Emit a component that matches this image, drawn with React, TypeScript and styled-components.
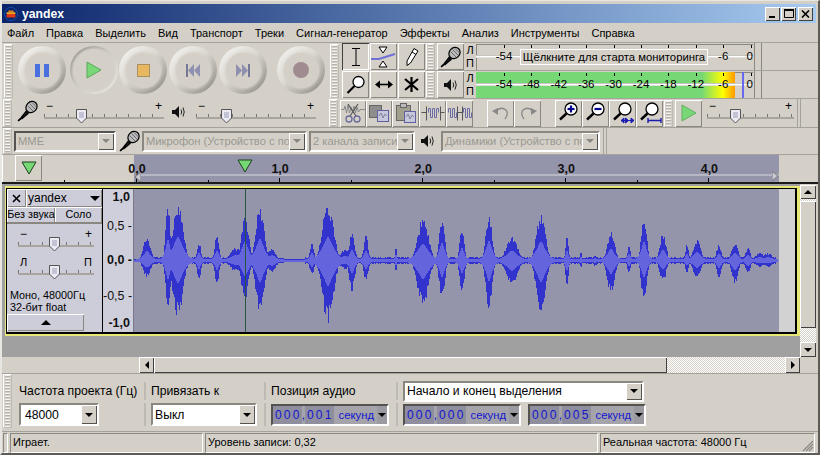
import React, { useMemo } from 'react';
import styled, { createGlobalStyle } from 'styled-components';

const GlobalStyle = createGlobalStyle`
  html, body { margin: 0; padding: 0; background: #fff; }
  * { box-sizing: border-box; }
  body { font-family: "Liberation Sans", Arial, sans-serif; font-size: 11px; color: #000; }
`;

const FACE = '#d4d0c8';
const LINE = '#a5a29b';

const Win = styled.div`
  width: 820px;
  height: 455px;
  background: ${FACE};
  border-top: 1px solid #e8e6e1;
  border-right: 2px solid #5c5b58;
  border-bottom: 2px solid #5c5b58;
  border-left: 2px solid #e8e6e1;
  padding-top: 3px;
  display: flex;
  flex-direction: column;
  overflow: hidden;
`;

const TitleBar = styled.div`
  height: 19px;
  flex: none;
  display: flex;
  align-items: center;
  margin-right: 2px;
  padding: 0 3px 0 2px;
  background: linear-gradient(90deg, #0a246a, #a6caf0);
  color: #fff;
  font-weight: bold;
  font-size: 12.2px;
`;

const TitleText = styled.span`
  margin-left: 4px;
  flex: 1;
`;

const WinBtn = styled.div<{ $gap?: number }>`
  width: 15px;
  height: 14px;
  margin-left: ${(p) => p.$gap ?? 0}px;
  background: ${FACE};
  box-shadow: inset 1px 1px #fff, inset -1px -1px #404040;
  display: flex;
  align-items: center;
  justify-content: center;
`;

const MenuBar = styled.div`
  height: 19px;
  flex: none;
  display: flex;
  gap: 12px;
  align-items: center;
  padding-left: 5px;
  font-size: 11px;
`;

const TopDock = styled.div`
  height: 57px;
  flex: none;
  display: flex;
  border-top: 1px solid ${LINE};
`;

const Grip = styled.div<{ $h?: number; $ml?: number }>`
  width: 9px;
  flex: none;
  height: ${(p) => (p.$h ? `${p.$h}px` : 'auto')};
  align-self: ${(p) => (p.$h ? 'center' : 'stretch')};
  margin-left: ${(p) => p.$ml ?? 0}px;
  border: 1px solid #bdbab3;
  border-top-color: #fff;
  border-left-color: #fff;
  background: repeating-linear-gradient(180deg, #f4f3f0 0 1px, #b5b2ab 1px 2px, ${FACE} 2px 3px);
  background-size: 5px 100%;
  background-position: center;
  background-repeat: no-repeat;
`;

const Transport = styled.div`
  width: 338px;
  flex: none;
  display: flex;
  align-items: center;
  padding: 1px 0 1px 2px;
`;

const RoundBtn = styled.div<{ $ml: number; $pressed?: boolean }>`
  width: 48px;
  height: 48px;
  flex: none;
  margin-left: ${(p) => p.$ml}px;
  margin-bottom: 2px;
  border-radius: 50%;
  display: flex;
  align-items: center;
  justify-content: center;
  background: ${(p) =>
    p.$pressed
      ? 'linear-gradient(135deg, #85827c, #c8c5bd 45%, #f4f3f0)'
      : 'linear-gradient(135deg, #f7f6f3, #dcd9d2 45%, #86837d)'};
  filter: blur(0.3px);
`;

const RoundFace = styled.div<{ $pressed?: boolean }>`
  width: ${(p) => (p.$pressed ? 42 : 35)}px;
  height: ${(p) => (p.$pressed ? 42 : 35)}px;
  border-radius: 50%;
  background: ${FACE};
  box-shadow: 0 0 3px 1px ${FACE};
  display: flex;
  align-items: center;
  justify-content: center;
`;

const Tools = styled.div`
  width: 84px;
  flex: none;
  margin-left: 2px;
  display: grid;
  grid-template-columns: repeat(3, 27px);
  grid-auto-rows: 27px;
  gap: 1px;
`;

const ToolBtn = styled.div<{ $w?: number; $pressed?: boolean; $ml?: number; $fill?: boolean }>`
  width: ${(p) => (p.$w ? `${p.$w}px` : 'auto')};
  height: ${(p) => (p.$w && !p.$fill ? '27px' : 'auto')};
  flex: none;
  margin-left: ${(p) => p.$ml ?? 0}px;
  background: ${FACE};
  box-shadow: ${(p) =>
    p.$pressed
      ? 'inset 1px 1px #404040, inset -1px -1px #fff'
      : 'inset 1px 1px #fff, inset -1px -1px #8a8780'};
  display: flex;
  align-items: center;
  justify-content: center;
`;

const MeterCol = styled.div`
  flex: 1;
  display: flex;
  flex-direction: column;
`;

const MeterRow = styled.div`
  height: 28px;
  flex: none;
  display: flex;
  align-items: stretch;
  border-bottom: 1px solid ${LINE};
`;

const LR = styled.div`
  width: 12px;
  flex: none;
  display: flex;
  flex-direction: column;
  justify-content: space-around;
  align-items: center;
  font-size: 11px;
  line-height: 12px;
`;

const Meter = styled.div`
  position: relative;
  width: 277px;
  flex: none;
  margin: 1px 0 0;
  background: ${FACE};
  box-shadow: inset 1px 1px #8a8780;
  overflow: hidden;
`;

const MeterFill = styled.div`
  height: 100%;
  width: 259px;
  background: linear-gradient(90deg, #76d874 0, #76d874 226px, #ffff00 247px, #ffb000 256px, #ff9a00 259px);
`;

const MeterDivider = styled.div`
  position: absolute;
  left: 0;
  right: 0;
  top: 11px;
  height: 3px;
  background: linear-gradient(180deg, #a8a8a0, #fff 50%, ${FACE});
`;

const MeterPeak = styled.div`
  position: absolute;
  top: 0;
  bottom: 0;
  left: 266px;
  width: 2px;
  background: #6868f0;
`;

const MeterTick = styled.span<{ $left: number }>`
  position: absolute;
  top: 1px;
  left: ${(p) => p.$left}px;
  width: 1px;
  height: 3px;
  background: #000;
`;

const MeterLabel = styled.span<{ $left: number }>`
  position: absolute;
  top: 5px;
  left: ${(p) => p.$left}px;
  width: 24px;
  margin-left: -12px;
  text-align: center;
  font-size: 11.5px;
  line-height: 14px;
`;

const MeterMessage = styled.div`
  position: absolute;
  left: 44px;
  top: 5px;
  width: 188px;
  height: 16px;
  border: 1px solid #fff;
  background: ${FACE};
  font-size: 11.3px;
  line-height: 14px;
  text-align: center;
  white-space: nowrap;
`;

const MeterEnd = styled.div`
  width: 8px;
  flex: none;
  border-left: 1px solid #8a8780;
  border-right: 1px solid #8a8780;
  margin-left: 1px;
`;

const Dock = styled.div<{ $h: number }>`
  height: ${(p) => p.$h}px;
  flex: none;
  display: flex;
  align-items: center;
  border-bottom: 1px solid ${LINE};
  padding-left: 1px;
`;

const DockSep = styled.div<{ $ml: number }>`
  width: 4px;
  align-self: stretch;
  flex: none;
  margin-left: ${(p) => p.$ml}px;
  border-left: 1px solid ${LINE};
  border-right: 1px solid ${LINE};
`;

const IconSlot = styled.div<{ $w: number; $ml: number; $pt?: number }>`
  width: ${(p) => p.$w}px;
  height: 26px;
  flex: none;
  margin-left: ${(p) => p.$ml}px;
  padding-top: ${(p) => p.$pt ?? 0}px;
`;

const SliderBox = styled.div<{ $w: number; $ml: number; $mt?: number }>`
  position: relative;
  width: ${(p) => p.$w}px;
  height: 26px;
  flex: none;
  margin-left: ${(p) => p.$ml}px;
  margin-top: ${(p) => p.$mt ?? 0}px;
`;

const SliderEnds = styled.div<{ $big?: boolean }>`
  display: flex;
  justify-content: space-between;
  padding: 0 2px;
  height: 12px;
  font-size: ${(p) => (p.$big ? 11 : 12)}px;
  line-height: 12px;
`;

const SliderRail = styled.div`
  margin-top: 2px;
  height: 5px;
  border-bottom: 2px solid #a8a59e;
  background: repeating-linear-gradient(90deg, #77746e 0 1px, transparent 1px 12px) left top / 100% 3px no-repeat;
`;

const SliderThumb = styled.svg<{ $left: number }>`
  position: absolute;
  left: ${(p) => p.$left}px;
  bottom: 2px;
`;

const Combo = styled.div<{ $w: number; $ml?: number; $h?: number; $off?: boolean; $dark?: boolean }>`
  width: ${(p) => p.$w}px;
  height: ${(p) => p.$h ?? 21}px;
  flex: none;
  margin-left: ${(p) => p.$ml ?? 0}px;
  display: flex;
  align-items: center;
  background: ${(p) => (p.$off ? FACE : '#fff')};
  color: ${(p) => (p.$off ? '#9a9890' : '#000')};
  border: 2px solid;
  border-color: ${(p) => (p.$dark ? '#55534f' : '#8a8780')} #fff #fff ${(p) => (p.$dark ? '#55534f' : '#8a8780')};
  font-size: ${(p) => (p.$off ? 11.2 : 12.2)}px;
  overflow: hidden;
`;

const ComboText = styled.span<{ $pl?: number }>`
  flex: 1;
  min-width: 0;
  padding-left: ${(p) => p.$pl ?? 2}px;
  white-space: nowrap;
  overflow: hidden;
`;

const DropBtn = styled.div`
  width: 16px;
  align-self: stretch;
  flex: none;
  background: ${FACE};
  box-shadow: inset 1px 1px #fff, inset -1px -1px #55534f;
  display: flex;
  align-items: center;
  justify-content: center;
`;

const RulerRow = styled.div`
  height: 29px;
  flex: none;
  display: flex;
  border-bottom: 2px solid #1a1a1a;
`;

const RulerLeft = styled.div`
  position: relative;
  width: 132px;
  flex: none;
  padding-left: 12px;
  border-left: 1px solid #fff;
`;

const PlayAtBtn = styled.div`
  width: 27px;
  height: 26px;
  background: ${FACE};
  box-shadow: inset 1px 1px #fff, inset -1px -1px #8a8780;
  display: flex;
  align-items: center;
  justify-content: center;
`;

const RulerBody = styled.div`
  position: relative;
  width: 645px;
  flex: none;
  background: #9494aa;
`;

const RulerSlide = styled.div`
  position: absolute;
  left: 2px;
  right: 0;
  top: 19px;
  height: 2px;
  background: #b6b6c4;
`;

const RulerNum = styled.span<{ $left: number }>`
  position: absolute;
  top: 7px;
  left: ${(p) => p.$left}px;
  transform: translateX(-50%);
  font-size: 12.5px;
  font-weight: bold;
  line-height: 14px;
  color: #111;
`;

const RulerTick = styled.span<{ $left: number; $major?: boolean }>`
  position: absolute;
  bottom: 0;
  left: ${(p) => p.$left}px;
  width: 1px;
  height: ${(p) => (p.$major ? 4 : 2)}px;
  background: #000;
`;

const RulerMark = styled.svg<{ $left: number; $top: number }>`
  position: absolute;
  left: ${(p) => p.$left}px;
  top: ${(p) => p.$top}px;
`;

const TrackZone = styled.div`
  height: 173px;
  flex: none;
  display: flex;
`;

const TrackScroll = styled.div`
  width: 798px;
  flex: none;
  background: #a0a0a0;
  padding: 2px 0 0 3px;
`;

const TrackFrame = styled.div`
  width: 795px;
  height: 150px;
  background: #e8e878;
  padding: 2px 3px 2px 1px;
`;

const Track = styled.div`
  height: 100%;
  display: flex;
  border: 1px solid #000;
  border-right-width: 2px;
  border-bottom-width: 2px;
  background: #000;
`;

const TrackPanel = styled.div`
  width: 96px;
  flex: none;
  display: flex;
  flex-direction: column;
  background: #cdcdda;
  border-right: 1px solid #000;
`;

const PanelHead = styled.div`
  height: 18px;
  flex: none;
  display: flex;
`;

const PanelClose = styled.div`
  width: 19px;
  flex: none;
  box-shadow: inset 1px 1px #fff, inset -1px -1px #8a8780;
  display: flex;
  align-items: center;
  justify-content: center;
`;

const PanelName = styled.div`
  flex: 1;
  display: flex;
  align-items: center;
  justify-content: space-between;
  padding: 0 2px 0 2px;
  font-size: 12px;
  box-shadow: inset 1px 1px #fff, inset -1px -1px #8a8780;
`;

const PanelBtns = styled.div`
  height: 17px;
  flex: none;
  display: flex;
  border-bottom: 2px solid #8a8780;
`;

const PanelBtn = styled.div<{ $w: number }>`
  width: ${(p) => p.$w}px;
  flex: none;
  text-align: center;
  line-height: 15px;
  font-size: 10.8px;
  white-space: nowrap;
  overflow: hidden;
  box-shadow: inset 1px 1px #fff, inset -1px 0 #8a8780;
`;

const PanelInfo = styled.div`
  margin: 7px 0 0 3px;
  font-size: 10.8px;
  line-height: 12px;
`;

const Collapse = styled.div`
  width: 77px;
  height: 17px;
  margin-top: 1px;
  box-shadow: inset 1px 1px #fff, inset -1px -1px #8a8780;
  display: flex;
  align-items: center;
  justify-content: center;
`;

const VRuler = styled.div`
  width: 31px;
  flex: none;
  display: flex;
  flex-direction: column;
  background: #cfcfdb;
  border-right: 1px solid #77778a;
`;

const VRulerMark = styled.div<{ $bold?: boolean; $tick?: boolean; $mt: number }>`
  margin-top: ${(p) => p.$mt}px;
  text-align: right;
  padding-right: ${(p) => (p.$tick ? 1 : 3)}px;
  font-size: 12.5px;
  line-height: 14px;
  font-weight: ${(p) => (p.$bold ? 'bold' : 'normal')};
  color: #111;
  white-space: nowrap;
`;

const WaveZone = styled.div`
  flex: 1;
  display: flex;
  background: #d2d2d2;
`;

const WaveSvg = styled.svg`
  display: block;
  flex: none;
  background: #9494aa;
`;

const VBar = styled.div`
  width: 16px;
  flex: none;
  display: flex;
  flex-direction: column;
  background: repeating-conic-gradient(#fff 0 25%, ${FACE} 0 50%) 0 0 / 2px 2px;
  margin-top: 1px;
`;

const ScrollBtn = styled.div<{ $w?: number; $h?: number; $mt?: number }>`
  width: ${(p) => (p.$w ? `${p.$w}px` : '100%')};
  height: ${(p) => (p.$h ? `${p.$h}px` : '100%')};
  margin-top: ${(p) => p.$mt ?? 0}px;
  flex: none;
  background: ${FACE};
  box-shadow: inset 1px 1px #fff, inset -1px -1px #404040;
  display: flex;
  align-items: center;
  justify-content: center;
`;

const Spacer = styled.div`
  flex: 1;
`;

const HBarRow = styled.div`
  height: 16px;
  flex: none;
  display: flex;
  padding-left: 137px;
`;

const HBar = styled.div`
  width: 661px;
  flex: none;
  display: flex;
  background: repeating-conic-gradient(#fff 0 25%, ${FACE} 0 50%) 0 0 / 2px 2px;
`;

const SelBar = styled.div`
  height: 59px;
  flex: none;
  display: flex;
  border-top: 1px solid ${LINE};
  border-bottom: 1px solid ${LINE};
  padding: 0 0 3px 1px;
`;

const SelGroup = styled.div<{ $w: number; $first?: boolean }>`
  width: ${(p) => p.$w}px;
  flex: none;
  display: flex;
  flex-direction: column;
  gap: 3px;
  padding-top: 8px;
  margin-left: ${(p) => (p.$first ? 7 : 0)}px;
`;

const SelCell = styled.div<{ $sep?: boolean; $h: number }>`
  height: ${(p) => p.$h}px;
  display: flex;
  align-items: center;
  font-size: 12.2px;
  white-space: nowrap;
  padding-left: ${(p) => (p.$sep ? 5 : 0)}px;
  border-left: ${(p) => (p.$sep ? `2px solid #bdbab3` : 'none')};
`;

const TimeCtl = styled.div<{ $ml?: number }>`
  width: 118px;
  height: 22px;
  flex: none;
  margin-left: ${(p) => p.$ml ?? 0}px;
  display: flex;
  align-items: center;
  background: #a4a4aa;
  border: 2px solid;
  border-color: #55534f #fff #fff #55534f;
  color: #1414d0;
  font-size: 12px;
  overflow: hidden;
`;

const Digits = styled.span`
  height: 100%;
  background: #8e8e9e;
  padding: 0 0 0 2px;
  letter-spacing: 2.2px;
  line-height: 18px;
`;

const Comma = styled.span`
  line-height: 18px;
`;

const TimeUnit = styled.span`
  margin-left: 5px;
  flex: 1;
  font-size: 11.3px;
  white-space: nowrap;
`;

const TimeDrop = styled.div`
  width: 10px;
  align-self: stretch;
  flex: none;
  background: #9a9aa0;
  display: flex;
  align-items: center;
  justify-content: center;
`;

const StatusBar = styled.div`
  flex: 1;
  display: flex;
  gap: 2px;
  padding: 1px 0 0 1px;
`;

const StatusCell = styled.div<{ $w: number }>`
  width: ${(p) => p.$w}px;
  flex: none;
  padding-left: 2px;
  font-size: 11px;
  line-height: 17px;
  border: 1px solid;
  border-color: #8a8780 #fff #fff #8a8780;
  white-space: nowrap;
  position: relative;
`;

const ResizeGrip = styled.svg`
  position: absolute;
  right: 0;
  bottom: 0;
`;

/* icons */

const Arrow = ({ dir = 'down', s = 4, c = '#000' }: { dir?: 'down' | 'up' | 'left' | 'right'; s?: number; c?: string }) => {
  const pts = {
    down: `0,0 ${s * 2},0 ${s},${s}`,
    up: `${s},0 ${s * 2},${s} 0,${s}`,
    left: `${s},0 ${s},${s * 2} 0,${s}`,
    right: `0,0 ${s},${s} 0,${s * 2}`,
  }[dir];
  const vertical = dir === 'down' || dir === 'up';
  return (
    <svg width={vertical ? s * 2 : s} height={vertical ? s : s * 2}>
      <polygon points={pts} fill={c} />
    </svg>
  );
};

const Mic = () => (
  <svg width="22" height="22" viewBox="0 0 22 22">
    <path d="M1.5 20.5 L4 18 L9 11.5 L11 13.5 L4.5 19" fill="#222" stroke="#000" strokeWidth="1.4" />
    <path d="M1 21 L4 18.5" stroke="#000" strokeWidth="1.5" />
    <ellipse cx="14.5" cy="7" rx="6" ry="5.2" transform="rotate(-45 14.5 7)" fill="#bbb" stroke="#000" strokeWidth="1.2" />
    <path d="M10.5 5.5 L16 11 M12.5 3.5 L18 9 M15 2.5 L19.5 7" stroke="#555" strokeWidth="0.8" />
  </svg>
);

const Speaker = () => (
  <svg width="14" height="14" viewBox="0 0 14 14">
    <polygon points="0,5 3,5 7,1 7,13 3,9 0,9" fill="#111" />
    <path d="M9 4.5 Q10.5 7 9 9.5 M11 2.5 Q13.5 7 11 11.5" stroke="#222" strokeWidth="1" fill="none" />
  </svg>
);

const Lens = ({ mark, extra }: { mark?: '+' | '-'; extra?: 'fit' | 'sel' }) => (
  <svg width="24" height="24" viewBox="0 0 24 24">
    <circle cx="14" cy="8" r="6" fill="#fff" stroke="#000" strokeWidth="1.3" />
    <path d="M9.5 12.5 L3 18.5" stroke="#000" strokeWidth="2.4" />
    {mark && <path d="M10.5 8 H17.5" stroke="#00008c" strokeWidth="2.2" />}
    {mark === '+' && <path d="M14 4.5 V11.5" stroke="#00008c" strokeWidth="2.2" />}
    {extra === 'fit' && (
      <g fill="#1c1cb0" stroke="#1c1cb0">
        <path d="M10 19.5 H23" strokeWidth="1" />
        <polygon points="10,19.5 13,17 13,22" />
        <polygon points="17.5,19.5 14.5,17 14.5,22" />
        <polygon points="23,19.5 20,17 20,22" />
      </g>
    )}
    {extra === 'sel' && <path d="M10 17 V22 M10 19.5 H23 M23 17 V22" stroke="#1c1cb0" strokeWidth="1.4" fill="none" />}
  </svg>
);

const WaveGlyph = ({ d, bars }: { d: string; bars: string }) => (
  <svg width="24" height="18" viewBox="0 0 24 18">
    <g transform="translate(0.5 0.5)">
      <path d={d} fill="none" stroke="#6c6ca4" strokeWidth="1" />
      <path d={bars} fill="none" stroke="#555" strokeWidth="1" />
    </g>
  </svg>
);

const Thumb = ({ left }: { left: number }) => (
  <SliderThumb $left={left} width="13" height="16" viewBox="0 0 13 16">
    <path d="M1.5 1.5 H11.5 V10 L6.5 15 L1.5 10 Z" fill="#ecebf4" stroke="#555" strokeWidth="1" />
    <path d="M4 5 H9 M4 7 H9 M4 9 H9" stroke="#9a9ab8" strokeWidth="1" />
  </SliderThumb>
);

const Slider = ({ w, ml, mt, thumb, a = '−', b = '+' }: { w: number; ml: number; mt?: number; thumb: number; a?: string; b?: string }) => (
  <SliderBox $w={w} $ml={ml} $mt={mt}>
    <SliderEnds $big={a !== '−'}>
      <span>{a}</span>
      <span>{b}</span>
    </SliderEnds>
    <SliderRail />
    <Thumb left={thumb} />
  </SliderBox>
);

const Time = ({ a, b, ml }: { a: string; b: string; ml?: number }) => (
  <TimeCtl $ml={ml}>
    <Digits>{a}</Digits>
    <Comma>,</Comma>
    <Digits>{b}</Digits>
    <TimeUnit>секунд</TimeUnit>
    <TimeDrop>
      <Arrow s={4} />
    </TimeDrop>
  </TimeCtl>
);

/* waveform: [centre x, up, down, width] in screen pixels */
const BUMPS: number[][] = [
  [147, 22, 16, 4], [168, 52, 46, 2.6], [178, 57, 54, 5.5], [199, 19, 20, 2], [217, 24, 22, 2.4],
  [236, 12, 10, 6], [245, 45, 38, 4], [260, 52, 51, 4.6], [272, 12, 12, 4], [312, 18, 15, 2.2],
  [328, 56, 60, 6], [345, 10, 8, 5], [352, 25, 30, 3], [366, 24, 20, 2.4], [396, 14, 12, 1],
  [423, 40, 44, 6], [442, 43, 40, 3], [462, 30, 31, 2.6], [489, 47, 50, 3.4], [512, 23, 24, 6],
  [541, 45, 52, 5], [567, 24, 25, 1.6], [581, 10, 7, 1], [595, 5, 5, 2], [611, 27, 32, 4],
  [629, 16, 13, 1.6], [644, 46, 40, 3], [663, 26, 21, 3.4], [687, 15, 12, 1.8], [697, 20, 18, 4],
  [719, 15, 17, 2.6], [735, 18, 23, 3.4], [748, 12, 13, 2.6], [760, 7, 6, 5], [768, 7, 6, 5],
];

const noise = (n: number) => {
  const v = Math.sin(n * 12.9898) * 43758.5453;
  return v - Math.floor(v);
};

const Waveform = () => {
  const { peak, rms } = useMemo(() => {
    let p = '';
    let r = '';
    for (let x = 134; x < 778; x++) {
      let up = 0;
      let down = 0;
      let rUp = 0;
      let rDown = 0;
      for (const [c, u, d, w] of BUMPS) {
        const dist = Math.abs(x + 0.5 - c);
        const k = Math.exp(-Math.pow(dist / (w * 1.25), 2.2));
        const kr = Math.exp(-Math.pow(dist / (w * 1.3), 1.4));
        up = Math.max(up, u * k);
        down = Math.max(down, d * k);
        rUp = Math.max(rUp, u * 0.42 * kr);
        rDown = Math.max(rDown, d * 0.42 * kr);
      }
      const silent = (x > 283 && x < 305) || x > 775 || x < 141;
      const base = silent ? 0.6 : 1.5 + noise(x) * 2;
      const nu = 0.76 + noise(x + 0.3) * 0.28;
      const nd = 0.76 + noise(x + 0.7) * 0.28;
      const t = Math.round(71 - Math.max(up * nu, base));
      const b = Math.round(72 + Math.max(down * nd, base));
      const col = x - 134 + 0.5;
      p += `M${col} ${t}V${b}`;
      r += `M${col} ${Math.round(71 - Math.max(rUp, silent ? 0.5 : 1))}V${Math.round(72 + Math.max(rDown, silent ? 0.5 : 1))}`;
    }
    return { peak: p, rms: r };
  }, []);
  return (
    <WaveSvg width="645" height="143" shapeRendering="crispEdges">
      <path d={peak} stroke="#3232cc" strokeWidth="1" fill="none" />
      <path d={rms} stroke="#6464dc" strokeWidth="1" fill="none" />
      <path d="M111.5 0V143" stroke="#28583c" strokeWidth="1" />
    </WaveSvg>
  );
};

const MENU = ['Файл', 'Правка', 'Выделить', 'Вид', 'Транспорт', 'Треки', 'Сигнал-генератор', 'Эффекты', 'Анализ', 'Инструменты', 'Справка'];
const DB = ['-54', '-48', '-42', '-36', '-30', '-24', '-18', '-12', '-6'];
const dbLeft = (i: number) => 28 + i * 27.4;
const METER_TICKS = Array.from({ length: 10 }, (_, i) => 28 + i * 27.4);
const SECS = ['0,0', '1,0', '2,0', '3,0', '4,0'];
const PX_PER_SEC = 143.1;

export default function App() {
  return (
    <>
      <GlobalStyle />
      <Win>
        <TitleBar>
          <svg width="14" height="14" viewBox="0 0 16 16">
            <circle cx="8" cy="8" r="7.5" fill="#0a246a" stroke="#1c50b0" />
            <rect x="3" y="6" width="10" height="2" fill="#f0b020" />
            <rect x="3" y="8" width="10" height="4" fill="#e03818" />
            <rect x="5" y="4" width="6" height="2" fill="#e08020" />
          </svg>
          <TitleText>yandex</TitleText>
          <WinBtn>
            <svg width="8" height="8"><rect x="0" y="6" width="6" height="2" fill="#000" /></svg>
          </WinBtn>
          <WinBtn $gap={1}>
            <svg width="10" height="9"><path d="M0.5 1.5H9.5V8.5H0.5Z" fill="none" stroke="#000" /><rect width="10" height="2" fill="#000" /></svg>
          </WinBtn>
          <WinBtn $gap={2}>
            <svg width="9" height="8"><path d="M1 0.5L8 7.5M8 0.5L1 7.5" stroke="#000" strokeWidth="1.6" /></svg>
          </WinBtn>
        </TitleBar>

        <MenuBar>
          {MENU.map((m) => (
            <span key={m}>{m}</span>
          ))}
        </MenuBar>

        <TopDock>
          <Transport>
            <Grip />
            <RoundBtn $ml={5}>
              <RoundFace>
                <svg width="14" height="13"><rect x="0" width="5" height="13" fill="#4a70e0" /><rect x="9" width="5" height="13" fill="#4a70e0" /></svg>
              </RoundFace>
            </RoundBtn>
            <RoundBtn $ml={4} $pressed>
              <RoundFace $pressed>
                <svg width="16" height="18"><polygon points="1,1 15,9 1,17" fill="#78d878" stroke="#5aa85a" /></svg>
              </RoundFace>
            </RoundBtn>
            <RoundBtn $ml={1}>
              <RoundFace>
                <svg width="13" height="13"><rect x="0.5" y="0.5" width="12" height="12" fill="#e8b860" stroke="#a89060" /></svg>
              </RoundFace>
            </RoundBtn>
            <RoundBtn $ml={2}>
              <RoundFace>
                <svg width="14" height="13"><rect width="2" height="13" fill="#77779a" /><polygon points="8,0 8,13 2,6.5" fill="#9090b0" /><polygon points="14,0 14,13 8,6.5" fill="#9090b0" /></svg>
              </RoundFace>
            </RoundBtn>
            <RoundBtn $ml={2}>
              <RoundFace>
                <svg width="14" height="13"><rect x="12" width="2" height="13" fill="#77779a" /><polygon points="0,0 6,6.5 0,13" fill="#9090b0" /><polygon points="6,0 12,6.5 6,13" fill="#9090b0" /></svg>
              </RoundFace>
            </RoundBtn>
            <RoundBtn $ml={10}>
              <RoundFace>
                <svg width="16" height="16"><circle cx="8" cy="8" r="8" fill="#a08c90" /></svg>
              </RoundFace>
            </RoundBtn>
            <Grip $ml={5} />
          </Transport>

          <Tools>
            <ToolBtn $pressed>
              <svg width="10" height="18"><path d="M1 0.5H9M5 0.5V17.5M1 17.5H9" stroke="#000" fill="none" /></svg>
            </ToolBtn>
            <ToolBtn>
              <svg width="25" height="24" viewBox="0 0 25 24">
                <polygon points="8,2 16,2 12,8" fill="#fff" stroke="#000" />
                <polygon points="8,22 16,22 12,16" fill="#fff" stroke="#000" />
                <path d="M0 14 H8 L24 9" stroke="#7070d8" strokeWidth="2.2" fill="none" />
              </svg>
            </ToolBtn>
            <ToolBtn>
              <svg width="14" height="20" viewBox="0 0 14 20"><path d="M9 1.5 L13 4 L5.5 16 L2 18.5 L2 14 Z" fill="#fff" stroke="#000" /><path d="M7 5 L11 7.5" stroke="#000" /></svg>
            </ToolBtn>
            <ToolBtn>
              <svg width="20" height="20" viewBox="0 0 20 20"><circle cx="12.5" cy="7" r="5.5" fill="#fff" stroke="#000" strokeWidth="1.3" /><path d="M8.5 11 L1.5 18" stroke="#000" strokeWidth="2.2" /></svg>
            </ToolBtn>
            <ToolBtn>
              <svg width="18" height="9" viewBox="0 0 18 9"><path d="M3 4.5H15" stroke="#000" strokeWidth="1.6" /><polygon points="0,4.5 5,0.5 5,8.5" /><polygon points="18,4.5 13,0.5 13,8.5" /></svg>
            </ToolBtn>
            <ToolBtn>
              <svg width="15" height="15" viewBox="0 0 15 15"><path d="M7.5 0V15M1 2L14 13M14 2L1 13" stroke="#000" strokeWidth="2.2" /></svg>
            </ToolBtn>
          </Tools>

          <MeterCol>
            <MeterRow>
              <Grip />
              <ToolBtn $w={27} $ml={2} $fill>
                <Mic />
              </ToolBtn>
              <LR><span>Л</span><span>П</span></LR>
              <Meter>
                <MeterDivider />
                {METER_TICKS.map((l) => <MeterTick key={l} $left={l} />)}
                <MeterLabel $left={dbLeft(0)}>-54</MeterLabel>
                <MeterLabel $left={dbLeft(8)}>-6</MeterLabel>
                <MeterLabel $left={dbLeft(9) - 1}>0</MeterLabel>
                <MeterMessage>Щёлкните для старта мониторинга</MeterMessage>
              </Meter>
              <MeterEnd />
            </MeterRow>
            <MeterRow>
              <Grip />
              <ToolBtn $w={27} $ml={2} $fill>
                <Speaker />
              </ToolBtn>
              <LR><span>Л</span><span>П</span></LR>
              <Meter>
                <MeterFill />
                <MeterDivider />
                <MeterPeak />
                {METER_TICKS.map((l) => <MeterTick key={l} $left={l} />)}
                {DB.map((d, i) => <MeterLabel key={d} $left={dbLeft(i)}>{d}</MeterLabel>)}
                <MeterLabel $left={dbLeft(9) - 1}>0</MeterLabel>
              </Meter>
              <MeterEnd />
            </MeterRow>
          </MeterCol>
        </TopDock>

        <Dock $h={29}>
          <Grip />
          <IconSlot $w={22} $ml={5}><Mic /></IconSlot>
          <Slider w={120} ml={5} thumb={31} />
          <IconSlot $w={14} $ml={8} $pt={5}><Speaker /></IconSlot>
          <Slider w={120} ml={10} thumb={24} />
          <Grip $ml={13} />
          <ToolBtn $w={26} $ml={2}>
            <svg width="24" height="22" viewBox="0 0 24 22">
              <path d="M0 7.5H3L4 4 5.5 11 7 3 8.5 11 10 5 11.5 10 13 4 14.5 11 16 5 17.5 10 19 7.5H24" fill="none" stroke="#8a8a8a" />
              <path d="M7 2 L15 14 M17 2 L9 14" stroke="#555" strokeWidth="1.2" />
              <circle cx="8" cy="17" r="3" fill="none" stroke="#6a6a9a" strokeWidth="1.3" />
              <circle cx="16" cy="17" r="3" fill="none" stroke="#6a6a9a" strokeWidth="1.3" />
            </svg>
          </ToolBtn>
          <ToolBtn $w={26}>
            <svg width="22" height="20" viewBox="0 0 22 20"><rect x="1.5" y="2.5" width="12" height="12" fill="#8e8e8e" stroke="#666" /><rect x="9.5" y="7.5" width="11" height="11" fill="#c8c8dc" stroke="#6060a0" /><path d="M11 13 L13 10 15 15 17 11 19 13" stroke="#8080a0" fill="none" /></svg>
          </ToolBtn>
          <ToolBtn $w={27}>
            <svg width="22" height="22" viewBox="0 0 22 22"><rect x="1.5" y="3.5" width="14" height="15" fill="#a0a08c" stroke="#666" /><rect x="5.5" y="1.5" width="6" height="4" fill="#bbb" stroke="#666" /><rect x="9.5" y="9.5" width="11" height="11" fill="#c8c8dc" stroke="#6060a0" /><path d="M11 15 L13 12 15 17 17 13 19 15" stroke="#8080a0" fill="none" /></svg>
          </ToolBtn>
          <ToolBtn $w={27}>
            <WaveGlyph bars="M5 2V16M19 2V16M0 8H5M19 8H23" d="M7 8V4H9V13H11V4H13V13H15V4H17V8" />
          </ToolBtn>
          <ToolBtn $w={27}>
            <WaveGlyph bars="M9 2V16M14 2V16M9 8H14" d="M0 8V4H2V13H4V4H6V13H8V8M15 8V4H17V13H19V4H21V13H23V8" />
          </ToolBtn>
          <ToolBtn $w={27} $ml={14}>
            <svg width="18" height="14" viewBox="0 0 18 14"><path d="M4 5 Q9 0 14 4 Q17 8 13 13" fill="none" stroke="#888" strokeWidth="1.3" /><polygon points="0,5 6,2 6,9" fill="#888" /></svg>
          </ToolBtn>
          <ToolBtn $w={27}>
            <svg width="18" height="14" viewBox="0 0 18 14"><path d="M14 5 Q9 0 4 4 Q1 8 5 13" fill="none" stroke="#888" strokeWidth="1.3" /><polygon points="18,5 12,2 12,9" fill="#888" /></svg>
          </ToolBtn>
          <ToolBtn $w={27} $ml={14}><Lens mark="+" /></ToolBtn>
          <ToolBtn $w={27}><Lens mark="-" /></ToolBtn>
          <ToolBtn $w={27}><Lens extra="fit" /></ToolBtn>
          <ToolBtn $w={27}><Lens extra="sel" /></ToolBtn>
          <Grip $ml={1} $h={27} />
          <ToolBtn $w={27} $ml={2}>
            <svg width="16" height="18"><polygon points="1,1 15,9 1,17" fill="#78d878" stroke="#60b060" /></svg>
          </ToolBtn>
          <Slider w={87} ml={5} thumb={22} />
          <DockSep $ml={3} />
        </Dock>

        <Dock $h={27}>
          <Grip />
          <Combo $w={102} $ml={2} $off $dark>
            <ComboText>MME</ComboText>
            <DropBtn><Arrow c="#8a8780" /></DropBtn>
          </Combo>
          <IconSlot $w={22} $ml={3} $pt={2}><Mic /></IconSlot>
          <Combo $w={165} $ml={1} $off>
            <ComboText>Микрофон (Устройство с под</ComboText>
            <DropBtn><Arrow c="#8a8780" /></DropBtn>
          </Combo>
          <Combo $w={106} $ml={2} $off>
            <ComboText>2 канала записи</ComboText>
            <DropBtn><Arrow c="#8a8780" /></DropBtn>
          </Combo>
          <IconSlot $w={14} $ml={6} $pt={6}><Speaker /></IconSlot>
          <Combo $w={159} $ml={6} $off>
            <ComboText>Динамики (Устройство с по</ComboText>
            <DropBtn><Arrow c="#8a8780" /></DropBtn>
          </Combo>
          <DockSep $ml={3} />
        </Dock>

        <RulerRow>
          <RulerLeft>
            <PlayAtBtn>
              <svg width="16" height="14" viewBox="0 0 16 14"><polygon points="1,1 15,1 8,13" fill="#76d874" stroke="#1f3f1f" /></svg>
            </PlayAtBtn>
            <RulerTick $left={61} />
          </RulerLeft>
          <RulerBody>
            <RulerSlide />
            {SECS.map((s, i) => (
              <RulerNum key={s} $left={i * PX_PER_SEC + 3}>{s}</RulerNum>
            ))}
            {Array.from({ length: 9 }, (_, i) => (
              <RulerTick key={i} $left={Math.round(i * (PX_PER_SEC / 2)) + 2} $major={i % 2 === 0} />
            ))}
            <RulerMark $left={1} $top={17} width="6" height="10" viewBox="0 0 6 10"><polygon points="6,0 6,10 0,5" fill="#c8c8d0" stroke="#777" /></RulerMark>
            <RulerMark $left={638} $top={16} width="6" height="10" viewBox="0 0 6 10"><polygon points="0,0 0,10 6,5" fill="#c8c8d0" stroke="#777" /></RulerMark>
            <RulerMark $left={103} $top={4} width="16" height="14" viewBox="0 0 16 14">
              <polygon points="1,1 15,1 8,13" fill="#76d874" stroke="#1f3f1f" strokeWidth="1" />
            </RulerMark>
          </RulerBody>
        </RulerRow>

        <TrackZone>
          <TrackScroll>
            <TrackFrame>
              <Track>
                <TrackPanel>
                  <PanelHead>
                    <PanelClose>
                      <svg width="9" height="9"><path d="M1 1L8 8M8 1L1 8" stroke="#000" strokeWidth="1.6" /></svg>
                    </PanelClose>
                    <PanelName>yandex<Arrow s={5} /></PanelName>
                  </PanelHead>
                  <PanelBtns>
                    <PanelBtn $w={48}>Без звука</PanelBtn>
                    <PanelBtn $w={47}>Соло</PanelBtn>
                  </PanelBtns>
                  <Slider w={76} ml={11} mt={4} thumb={30} />
                  <Slider w={76} ml={11} mt={2} thumb={30} a="Л" b="П" />
                  <PanelInfo>Моно, 48000Гц<br />32-бит float</PanelInfo>
                  <Collapse><Arrow dir="up" s={5} /></Collapse>
                </TrackPanel>
                <VRuler>
                  <VRulerMark $bold $mt={1}>1,0</VRulerMark>
                  <VRulerMark $tick $mt={15}>0,5 -</VRulerMark>
                  <VRulerMark $bold $tick $mt={20}>0,0 -</VRulerMark>
                  <VRulerMark $tick $mt={22}>-0,5 -</VRulerMark>
                  <VRulerMark $bold $mt={13}>-1,0</VRulerMark>
                </VRuler>
                <WaveZone>
                  <Waveform />
                </WaveZone>
              </Track>
            </TrackFrame>
          </TrackScroll>
          <VBar>
            <ScrollBtn $h={14}><Arrow dir="up" /></ScrollBtn>
            <ScrollBtn $h={127} $mt={2} />
            <Spacer />
            <ScrollBtn $h={15}><Arrow /></ScrollBtn>
          </VBar>
        </TrackZone>

        <HBarRow>
          <HBar>
            <ScrollBtn $w={15}><Arrow dir="left" /></ScrollBtn>
            <ScrollBtn $w={513} />
            <Spacer />
            <ScrollBtn $w={15}><Arrow dir="right" /></ScrollBtn>
          </HBar>
        </HBarRow>

        <SelBar>
          <Grip />
          <SelGroup $w={125} $first>
            <SelCell $h={18}>Частота проекта (Гц)</SelCell>
            <SelCell $h={23}>
              <Combo $w={80} $h={23}>
                <ComboText $pl={4}>48000</ComboText>
                <DropBtn><Arrow /></DropBtn>
              </Combo>
            </SelCell>
          </SelGroup>
          <SelGroup $w={120}>
            <SelCell $h={18} $sep>Привязать к</SelCell>
            <SelCell $h={23} $sep>
              <Combo $w={106} $h={23}>
                <ComboText>Выкл</ComboText>
                <DropBtn><Arrow /></DropBtn>
              </Combo>
            </SelCell>
          </SelGroup>
          <SelGroup $w={132}>
            <SelCell $h={18} $sep>Позиция аудио</SelCell>
            <SelCell $h={23} $sep>
              <Time a="000" b="001" />
            </SelCell>
          </SelGroup>
          <SelGroup $w={260}>
            <SelCell $h={18} $sep>
              <Combo $w={241} $h={21}>
                <ComboText>Начало и конец выделения</ComboText>
                <DropBtn><Arrow /></DropBtn>
              </Combo>
            </SelCell>
            <SelCell $h={23} $sep>
              <Time a="000" b="000" />
              <Time a="000" b="005" ml={7} />
            </SelCell>
          </SelGroup>
        </SelBar>

        <StatusBar>
          <StatusCell $w={5} />
          <StatusCell $w={193}>Играет.</StatusCell>
          <StatusCell $w={393}>Уровень записи: 0,32</StatusCell>
          <StatusCell $w={215}>
            Реальная частота: 48000 Гц
            <ResizeGrip width="13" height="13" viewBox="0 0 13 13">
              <path d="M12 2L2 12M12 5L5 12M12 8L8 12" stroke="#8a8780" strokeWidth="1.2" />
            </ResizeGrip>
          </StatusCell>
        </StatusBar>
      </Win>
    </>
  );
}
